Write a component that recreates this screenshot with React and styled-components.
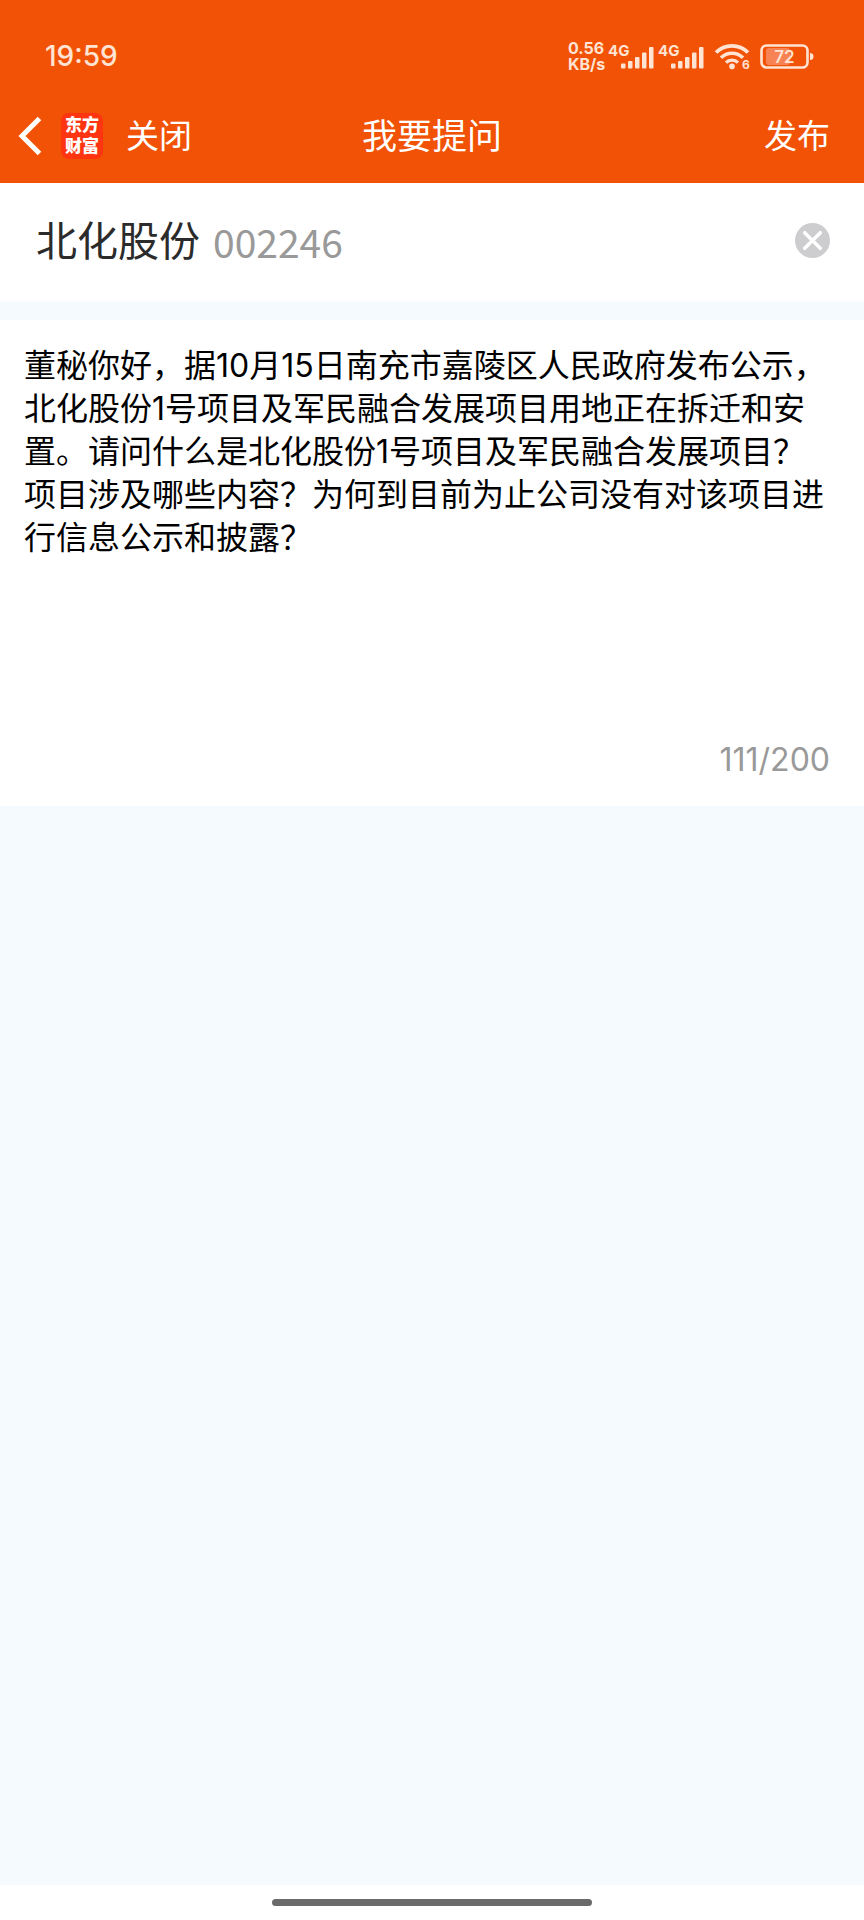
import React, { useState } from "react";
import styled, { createGlobalStyle } from "styled-components";

const GlobalStyle = createGlobalStyle`
  * {
    box-sizing: border-box;
  }

  body {
    margin: 0;
    background: #f5faff;
    font-family: Inter, "Noto Sans CJK SC", sans-serif;
  }

  button,
  input,
  textarea {
    margin: 0;
    padding: 0;
    border: 0;
    background: none;
    color: inherit;
    font: inherit;
    outline: none;
  }
`;

const Page = styled.div`
  min-height: 100vh;
  display: flex;
  flex-direction: column;
`;

const Header = styled.header`
  background: #f15205;
  color: #fff;
`;

const StatusBar = styled.div`
  height: 88px;
  padding: 24px 50px 0 45px;
  display: flex;
  align-items: center;
  justify-content: space-between;
  color: #ffe3d3;
`;

const Clock = styled.time`
  font-size: 28px;
  font-weight: 500;
  line-height: 32px;
`;

const StatusIcons = styled.div`
  display: flex;
  align-items: center;
`;

const Speed = styled.div`
  width: 40px;
  font-size: 16px;
  font-weight: 700;
  line-height: 16px;
  white-space: nowrap;
`;

const Signal = styled.svg`
  display: block;
  width: 50px;
  height: 28px;
  overflow: visible;
`;

const Wifi = styled.svg`
  display: block;
  width: 38px;
  height: 28px;
  margin-left: 6px;
  overflow: visible;
`;

const Battery = styled.svg`
  display: block;
  width: 54px;
  height: 28px;
  margin-left: 8px;
`;

const NavBar = styled.nav`
  height: 95px;
  padding: 0 34px 0 16px;
  display: flex;
  align-items: center;
`;

const NavSide = styled.div`
  flex: 1;
  display: flex;
  align-items: center;
  justify-content: ${(props) => (props.$end ? "flex-end" : "flex-start")};
`;

const BackButton = styled.button`
  width: 28px;
  height: 44px;
  cursor: pointer;

  svg {
    display: block;
  }
`;

const Logo = styled.a`
  width: 42px;
  height: 46px;
  margin: 0 23px 0 17px;
  display: flex;
  flex-direction: column;
  align-items: center;
  justify-content: center;
  border-radius: 8px;
  background: #ff3410;
  color: #fff;
  font-size: 17px;
  font-weight: 900;
  line-height: 21px;
  text-decoration: none;
`;

const NavButton = styled.button`
  font-size: 33px;
  line-height: 44px;
  cursor: pointer;
`;

const Title = styled.h1`
  margin: 0 0 0 18px;
  font-size: 35px;
  font-weight: 400;
  line-height: 44px;
`;

const Stock = styled.section`
  height: 119px;
  padding: 0 34px 2px 36px;
  display: flex;
  align-items: center;
  background: #fff;
  border-bottom: 2px solid #fdfbfd;
`;

const StockName = styled.span`
  color: #2b2b2b;
  font-size: 41px;
  line-height: 56px;
`;

const StockCode = styled.span`
  margin-left: 13px;
  flex: 1;
  color: #999;
  font-family: "Noto Sans CJK SC", sans-serif;
  font-size: 39px;
  line-height: 56px;
`;

const ClearButton = styled.button`
  width: 35px;
  height: 35px;
  cursor: pointer;

  svg {
    display: block;
  }
`;

const Question = styled.section`
  margin-top: 18px;
  padding: 24px 34px 23px 24px;
  display: flex;
  flex-direction: column;
  background: #fff;
`;

const QuestionInput = styled.textarea`
  display: block;
  width: 100%;
  height: 393px;
  resize: none;
  overflow: hidden;
  color: #000;
  font-size: 32px;
  line-height: 43px;
`;

const Counter = styled.div`
  align-self: flex-end;
  color: #999;
  font-size: 32px;
  line-height: 46px;
`;

const HomeBar = styled.footer`
  height: 35px;
  margin-top: auto;
  display: flex;
  align-items: center;
  justify-content: center;
  background: #fff;
`;

const HomeIndicator = styled.div`
  width: 37%;
  height: 7px;
  border-radius: 4px;
  background: #6b6a6b;
`;

const MAX_LENGTH = 200;

const draft =
  "董秘你好，据10月15日南充市嘉陵区人民政府发布公示，北化股份1号项目及军民融合发展项目用地正在拆迁和安置。请问什么是北化股份1号项目及军民融合发展项目？项目涉及哪些内容？为何到目前为止公司没有对该项目进行信息公示和披露？";

const SignalIcon = () => (
  <Signal viewBox="0 0 50 28" fill="currentColor">
    <text x="0" y="14" fontSize="15" fontWeight="700">
      4G
    </text>
    <rect x="13" y="21.5" width="4.5" height="5" rx="1" />
    <rect x="20" y="19" width="4.5" height="7.5" rx="1" />
    <rect x="27" y="15" width="4.5" height="11.5" rx="1" />
    <rect x="34" y="10.5" width="4.5" height="16" rx="1" />
    <rect x="41" y="5" width="4.5" height="21.5" rx="1" />
  </Signal>
);

function App() {
  const [question, setQuestion] = useState(draft);

  return (
    <Page>
      <GlobalStyle />
      <Header>
        <StatusBar>
          <Clock>19:59</Clock>
          <StatusIcons>
            <Speed>
              <div>0.56</div>
              <div>KB/s</div>
            </Speed>
            <SignalIcon />
            <SignalIcon />
            <Wifi viewBox="0 0 38 28" fill="none" stroke="currentColor">
              <path d="M2 10.5a22.5 22.5 0 0 1 32 0" strokeWidth="3.8" />
              <path d="M7 15.8a15.5 15.5 0 0 1 22 0" strokeWidth="3.6" />
              <path d="M12 20.6a8.5 8.5 0 0 1 12 0" strokeWidth="3.4" />
              <circle
                cx="18"
                cy="24.4"
                r="2.8"
                fill="currentColor"
                stroke="none"
              />
              <text
                x="28"
                y="27"
                fontSize="12"
                fontWeight="700"
                fill="currentColor"
                stroke="none"
              >
                6
              </text>
            </Wifi>
            <Battery viewBox="0 0 54 28" fill="none">
              <rect x="6" y="6" width="24" height="17" rx="3" fill="#f78355" />
              <rect
                x="1.5"
                y="3.5"
                width="46"
                height="22"
                rx="5"
                stroke="currentColor"
                strokeWidth="2.6"
              />
              <path d="M50 11q3.5 0 3.5 3.5T50 18z" fill="currentColor" />
              <text
                x="24.5"
                y="20.5"
                fontSize="17"
                fontWeight="600"
                textAnchor="middle"
                fill="currentColor"
              >
                72
              </text>
            </Battery>
          </StatusIcons>
        </StatusBar>
        <NavBar>
          <NavSide>
            <BackButton aria-label="返回">
              <svg width="28" height="44" viewBox="0 0 28 44" fill="none">
                <path
                  d="M23.5 4.5 6 22l17.5 17.5"
                  stroke="#fff"
                  strokeWidth="5"
                />
              </svg>
            </BackButton>
            <Logo href="#home">
              <span>东方</span>
              <span>财富</span>
            </Logo>
            <NavButton>关闭</NavButton>
          </NavSide>
          <Title>我要提问</Title>
          <NavSide $end>
            <NavButton>发布</NavButton>
          </NavSide>
        </NavBar>
      </Header>

      <Stock>
        <StockName>北化股份</StockName>
        <StockCode>002246</StockCode>
        <ClearButton aria-label="清除">
          <svg width="35" height="35" viewBox="0 0 36 36" fill="none">
            <circle cx="18" cy="18" r="18" fill="#cdccce" />
            <path
              d="M10 10l16 16M26 10L10 26"
              stroke="#fff"
              strokeWidth="3.6"
              strokeLinecap="round"
            />
          </svg>
        </ClearButton>
      </Stock>

      <Question>
        <QuestionInput
          aria-label="提问内容"
          maxLength={MAX_LENGTH}
          spellCheck={false}
          value={question}
          onChange={(e) => setQuestion(e.target.value)}
        />
        <Counter>
          {question.length}/{MAX_LENGTH}
        </Counter>
      </Question>

      <HomeBar>
        <HomeIndicator />
      </HomeBar>
    </Page>
  );
}

export default App;
